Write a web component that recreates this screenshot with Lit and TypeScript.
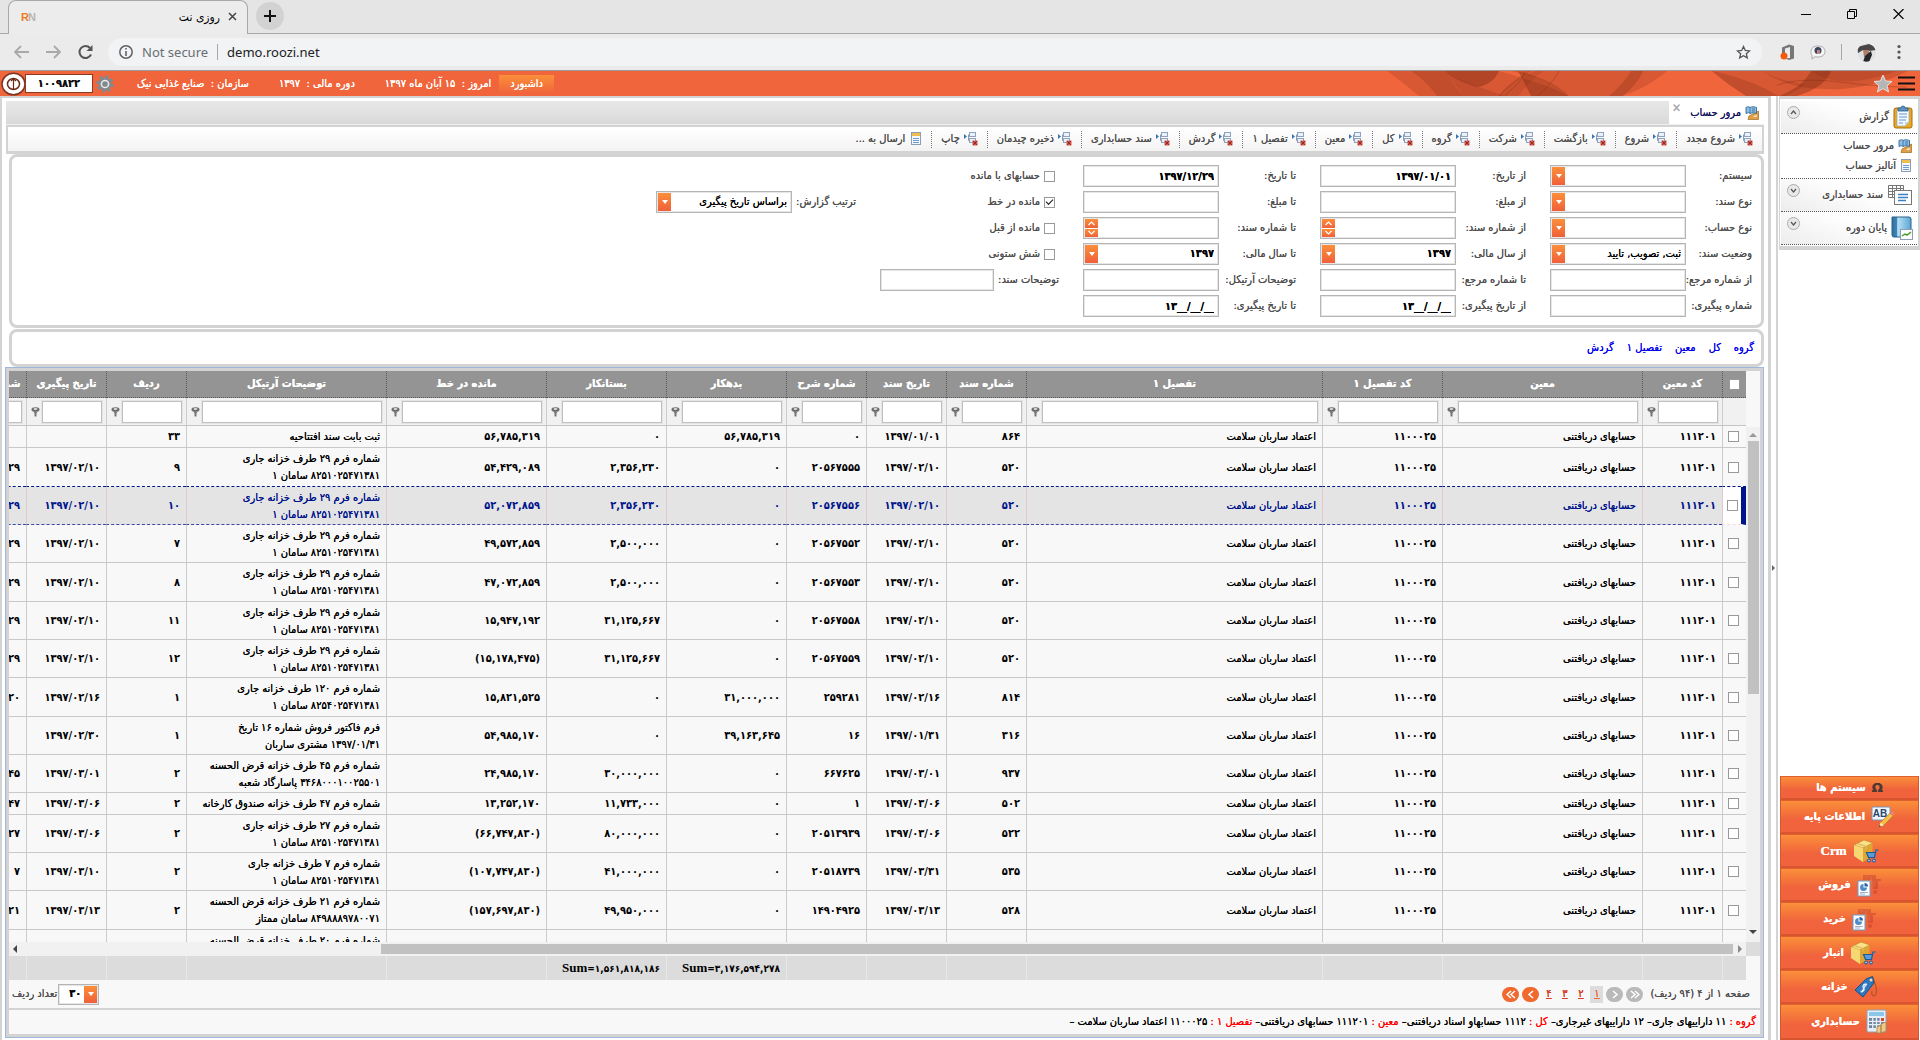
import { LitElement, html, css, nothing } from "lit";
import { customElement, state } from "lit/decorators.js";
import { classMap } from "lit/directives/class-map.js";

interface Row {
  doc: string;
  date: string;
  desc: string;
  debit: string;
  credit: string;
  balance: string;
  detail: string[];
  line: string;
  follow: string;
  form: string;
}

const SAMAN = "۸۲۵۱۰۲۵۴۷۱۳۸۱ سامان ۱";

const row = (
  doc: string, date: string, desc: string, debit: string, credit: string,
  balance: string, detail: string[], line: string, follow: string, form: string,
): Row => ({ doc, date, desc, debit, credit, balance, detail, line, follow, form });

const ROWS: Row[] = [
  row("۸۶۴", "۱۳۹۷/۰۱/۰۱", "۰", "۵۶,۷۸۵,۳۱۹", "۰", "۵۶,۷۸۵,۳۱۹", ["ثبت بابت سند افتتاحیه"], "۳۳", "", ""),
  row("۵۲۰", "۱۳۹۷/۰۲/۱۰", "۲۰۵۶۷۵۵۵", "۰", "۲,۳۵۶,۲۳۰", "۵۴,۴۲۹,۰۸۹", ["شماره فرم ۲۹ طرف خزانه جاری", SAMAN], "۹", "۱۳۹۷/۰۲/۱۰", "۲۹"),
  row("۵۲۰", "۱۳۹۷/۰۲/۱۰", "۲۰۵۶۷۵۵۶", "۰", "۲,۳۵۶,۲۳۰", "۵۲,۰۷۲,۸۵۹", ["شماره فرم ۲۹ طرف خزانه جاری", SAMAN], "۱۰", "۱۳۹۷/۰۲/۱۰", "۲۹"),
  row("۵۲۰", "۱۳۹۷/۰۲/۱۰", "۲۰۵۶۷۵۵۲", "۰", "۲,۵۰۰,۰۰۰", "۴۹,۵۷۲,۸۵۹", ["شماره فرم ۲۹ طرف خزانه جاری", SAMAN], "۷", "۱۳۹۷/۰۲/۱۰", "۲۹"),
  row("۵۲۰", "۱۳۹۷/۰۲/۱۰", "۲۰۵۶۷۵۵۳", "۰", "۲,۵۰۰,۰۰۰", "۴۷,۰۷۲,۸۵۹", ["شماره فرم ۲۹ طرف خزانه جاری", SAMAN], "۸", "۱۳۹۷/۰۲/۱۰", "۲۹"),
  row("۵۲۰", "۱۳۹۷/۰۲/۱۰", "۲۰۵۶۷۵۵۸", "۰", "۳۱,۱۲۵,۶۶۷", "۱۵,۹۴۷,۱۹۲", ["شماره فرم ۲۹ طرف خزانه جاری", SAMAN], "۱۱", "۱۳۹۷/۰۲/۱۰", "۲۹"),
  row("۵۲۰", "۱۳۹۷/۰۲/۱۰", "۲۰۵۶۷۵۵۹", "۰", "۳۱,۱۲۵,۶۶۷", "(۱۵,۱۷۸,۴۷۵)", ["شماره فرم ۲۹ طرف خزانه جاری", SAMAN], "۱۲", "۱۳۹۷/۰۲/۱۰", "۲۹"),
  row("۸۱۴", "۱۳۹۷/۰۲/۱۶", "۲۵۹۲۸۱", "۳۱,۰۰۰,۰۰۰", "۰", "۱۵,۸۲۱,۵۲۵", ["شماره فرم ۱۲۰ طرف خزانه جاری", "۸۲۵۴۰۲۵۴۷۱۳۸۱ سامان ۱"], "۱", "۱۳۹۷/۰۲/۱۶", "۱۲۰"),
  row("۳۱۶", "۱۳۹۷/۰۱/۳۱", "۱۶", "۳۹,۱۶۳,۶۴۵", "۰", "۵۴,۹۸۵,۱۷۰", ["فرم فاکتور فروش شماره ۱۶ تاریخ", "۱۳۹۷/۰۱/۳۱ مشتری ساربان"], "۱", "۱۳۹۷/۰۲/۳۰", ""),
  row("۹۳۷", "۱۳۹۷/۰۳/۰۱", "۶۶۷۶۲۵", "۰", "۳۰,۰۰۰,۰۰۰", "۲۴,۹۸۵,۱۷۰", ["شماره فرم ۴۵ طرف خزانه قرض الحسنه", "۳۴۶۸۰۰۰۱۰۰۲۵۵۰۱ پاسارگاد شعبه"], "۲", "۱۳۹۷/۰۳/۰۱", "۴۵"),
  row("۵۰۲", "۱۳۹۷/۰۳/۰۶", "۱", "۰", "۱۱,۷۳۳,۰۰۰", "۱۳,۲۵۲,۱۷۰", ["شماره فرم ۴۷ طرف خزانه صندوق کارخانه"], "۲", "۱۳۹۷/۰۳/۰۶", "۴۷"),
  row("۵۲۲", "۱۳۹۷/۰۳/۰۶", "۲۰۵۱۳۹۳۹", "۰", "۸۰,۰۰۰,۰۰۰", "(۶۶,۷۴۷,۸۳۰)", ["شماره فرم ۲۷ طرف خزانه جاری", SAMAN], "۲", "۱۳۹۷/۰۳/۰۶", "۲۷"),
  row("۵۳۵", "۱۳۹۷/۰۳/۳۱", "۲۰۵۱۸۷۳۹", "۰", "۴۱,۰۰۰,۰۰۰", "(۱۰۷,۷۴۷,۸۳۰)", ["شماره فرم ۷ طرف خزانه جاری", SAMAN], "۲", "۱۳۹۷/۰۳/۱۰", "۷"),
  row("۵۲۸", "۱۳۹۷/۰۳/۱۳", "۱۴۹۰۴۹۲۵", "۰", "۴۹,۹۵۰,۰۰۰", "(۱۵۷,۶۹۷,۸۳۰)", ["شماره فرم ۲۱ طرف خزانه قرض الحسنه", "۸۴۹۸۸۸۹۷۸۰۰۷۱ سامان ممتاز"], "۲", "۱۳۹۷/۰۳/۱۳", "۲۱"),
  row("", "", "", "", "", "", ["شماره فرم ۲۰ طرف خزانه قرض الحسنه", ""], "", "", ""),
];

const HEADS = [
  "کد معین", "معین", "کد تفصیل ۱", "تفصیل ۱", "شماره سند", "تاریخ سند", "شماره شرح",
  "بدهکار", "بستانکار", "مانده در خط", "توضیحات آرتیکل", "ردیف", "تاریخ پیگیری", "شماره پیگیری",
];

const TOOLS = [
  "شروع مجدد", "شروع", "بازگشت", "شرکت", "گروه", "کل", "معین", "تفصیل ۱",
  "گردش", "سند حسابداری", "ذخیره چیدمان", "چاپ",
];

/* ---------- icons ---------- */

const treeIcon = html`<svg width="14" height="14" viewBox="0 0 14 14">
  <path d="M0 2l3 2.500L0 7z" fill="#3a74b8"/>
  <path d="M4.500 2.500v6M4.500 8.500H6" stroke="#8b9bb2" fill="none"/>
  <rect x="5.500" y=".5" width="6" height="4" fill="#e9f1fb" stroke="#8fa3c0"/>
  <rect x="5.500" y="6.500" width="6" height="4" fill="#e9f1fb" stroke="#8fa3c0"/>
  <rect x="8.500" y="8.500" width="5" height="5" fill="#d0584e"/>
  <path d="M9 9l4 4m0-4l-4 4" stroke="#9a2c24" stroke-width="1"/>
</svg>`;

const sheetIcon = html`<svg width="12" height="14" viewBox="0 0 12 14">
  <rect x="1.500" y=".5" width="9" height="12" fill="#f4f8fd" stroke="#8c9db4"/>
  <rect x="2" y="1" width="8" height="3" fill="#f0bd4f"/>
  <path d="M3 6.500h6M3 8.500h6M3 10.500h6" stroke="#6d9ad0"/>
</svg>`;

const reviewIcon = html`<svg width="14" height="14" viewBox="0 0 14 14">
  <path d="M4 10l9.500-5v8.500H3z" fill="#e0a04a" stroke="#a56a1c" stroke-width=".7"/>
  <path d="M8 11l3.500-2.500V11z" fill="#fdf0d2"/>
  <path d="M1 1.500c2-1 3-1 4 0 2-1 4-1 6.500 0v6c-2.500-1-4.500-1-6.500 0-1-1-2-1-4 0z" fill="#8fbfe6" stroke="#2f6796" stroke-width=".9"/>
  <path d="M5 1.500v6M7 3h3M7 5h3" stroke="#2f6796" stroke-width=".8"/>
</svg>`;

const clipboardIcon = html`<svg width="20" height="24" viewBox="0 0 20 24">
  <rect x="1" y="3" width="18" height="20" rx="2" fill="#e9a925" stroke="#a96f0c"/>
  <path d="M4 5h12v12l-4 4H4z" fill="#f5faff" stroke="#96a7b8" stroke-width=".7"/>
  <path d="M12 21v-4h4z" fill="#c6d4e2"/>
  <path d="M6 9h8M6 12h8M6 15h7M6 18h4" stroke="#6098cf"/>
  <path d="M5 6V3h3a2 2 0 0 1 4 0h3v3z" fill="#5b93c2" stroke="#285d8d" stroke-width=".8"/>
</svg>`;

const docTableIcon = html`<svg width="26" height="22" viewBox="0 0 26 22">
  <path d="M1.500 1.500h15v12h-15zM1.500 4.500h15M1.500 7.500h15M1.500 10.500h15M5.500 1.500v12M9.500 1.500v12M13.500 1.500v12" fill="#fff" stroke="#777"/>
  <rect x="7.500" y="6.500" width="17" height="14" fill="#fdfeff" stroke="#777"/>
  <path d="M11 10.500h10M11 13.500h10M11 16.500h8" stroke="#3f7fc4" stroke-width="1.500"/>
</svg>`;

const bookIcon = html`<svg width="22" height="24" viewBox="0 0 22 24">
  <defs><linearGradient id="bk" x1="0" x2="1"><stop offset="0" stop-color="#2f6f9f"/><stop offset=".25" stop-color="#3f86b6"/><stop offset=".3" stop-color="#b7e0f5"/><stop offset="1" stop-color="#5aa6d3"/></linearGradient></defs>
  <path d="M1 1h17a2 2 0 0 1 2 2v18H3a2 2 0 0 1-2-2z" fill="url(#bk)" stroke="#2a618b"/>
  <rect x="9.500" y="13.500" width="12" height="10" fill="#fbfdff" stroke="#8c9db4"/>
  <path d="M11 20l3-2 2 1 4-3" stroke="#4a9a2c" stroke-width="1.500" fill="none"/>
</svg>`;

const chevron = (up: boolean) => html`<svg width="13" height="13" viewBox="0 0 13 13">
  <circle cx="6.500" cy="6.500" r="6" fill="#e9e9e9" stroke="#aaa"/>
  <path d=${up ? "M4 8l2.500-3L9 8" : "M4 5l2.500 3L9 5"} fill="none" stroke="#555" stroke-width="1.200"/>
</svg>`;

const filterIcon = html`<svg width="9" height="10" viewBox="0 0 9 10">
  <ellipse cx="4.500" cy="2.500" rx="4" ry="2.300" fill="#6b6b6b"/>
  <ellipse cx="4.500" cy="2" rx="2" ry="1" fill="#d8d8d8"/>
  <path d="M2.500 4.500h4l-1 2V9.500H3.500V6.500z" fill="#777"/>
</svg>`;

const boxCartIcon = html`<svg width="26" height="24" viewBox="0 0 26 24">
  <path d="M1 6v11l9 6 9-5V5z" fill="#c98f1f"/>
  <path d="M1 6l10-5 9 3-10 5z" fill="#fbe08a" stroke="#b98220" stroke-width=".6"/>
  <path d="M1 6l9 3v14l-9-6z" fill="#f7d774"/>
  <path d="M10 9l9.500-4.500V17L10 23z" fill="#e0a632"/>
  <path d="M5 4l9 3v3l-2 1V8L3 5z" fill="#d9b45a" opacity=".8"/>
  <path d="M25.500 11H23l-1.500 7.500h-6L13.500 13.500h9" fill="#5b9bd8" stroke="#1c5a9a" stroke-width="1.200"/>
  <circle cx="16" cy="21.500" r="1.500" fill="#8fc0ec" stroke="#1c5a9a"/>
  <circle cx="21" cy="21.500" r="1.500" fill="#8fc0ec" stroke="#1c5a9a"/>
</svg>`;

const reportCartIcon = html`<svg width="24" height="24" viewBox="0 0 24 24">
  <g fill="#b0302a" opacity=".35"><path d="M6 2h13v4h5v2h-3v8h-5l-1-9H6z"/><circle cx="18" cy="19" r="2"/></g>
  <path d="M9 4h2M14 4v4M17 8v6" stroke="#f0754f" opacity=".7"/>
  <rect x="1" y="8" width="12" height="15" fill="#fbfdff" stroke="#6f9cc6"/>
  <path d="M6.500 11a3.500 3.500 0 1 0 3.500 3.500H6.500z" fill="#4f8cc6"/>
  <path d="M7.500 10a3.500 3.500 0 0 1 3.500 3.500H7.500z" fill="#2c62a3"/>
  <path d="M3 19.500h8M3 21h5" stroke="#a8b2bf"/>
</svg>`;

const tagIcon = html`<svg width="24" height="24" viewBox="0 0 24 24">
  <path d="M19 3c2 6 5 12 3 16s-5 1-4-3" fill="none" stroke="#b8561c" stroke-width="1.300"/>
  <path d="M1 15L12 4l6.500-2.500L20 8 9 22z" fill="#2f78bd" stroke="#1b5088"/>
  <circle cx="17" cy="5" r="1.500" fill="#f5d6b0"/>
  <path d="M13 10c-3-2-5 1-3.500 3s0 4-3 3M12.500 8.500l-5 9" fill="none" stroke="#e7f2fc" stroke-width="1.300"/>
</svg>`;

const calcIcon = html`<svg width="22" height="26" viewBox="0 0 22 26">
  <rect x="1" y="1" width="19" height="22" rx="1.500" fill="#e8eef5" stroke="#8fa0b5"/>
  <rect x="3" y="3" width="15" height="4" fill="#8cc5ea"/>
  <path d="M3 9h15v10H3z" fill="#6f86a5"/>
  <path d="M3 12.300h15M3 15.700h15M6.700 9v10M10.500 9v10M14.300 9v10" stroke="#e8eef5" stroke-width="1.300"/>
  <rect x="15" y="9" width="3" height="3" fill="#d8472b"/>
  <path d="M11 18l4-2v8h-4zM15 15l5-2v9l-5 2z" fill="#ecc98c" stroke="#a67a3c" stroke-width=".7"/>
</svg>`;

const abIcon = html`<svg width="24" height="22" viewBox="0 0 24 22">
  <rect x="1" y="1" width="18" height="13" rx="1" fill="#f1f7fd" stroke="#7e95b3"/>
  <text x="9" y="11" text-anchor="middle" font-family="Liberation Sans" font-weight="bold" font-size="10" fill="#26456e">AB</text>
  <path d="M8 21l1.500-4.500L19 7l3 3-9.500 9.500z" fill="#f6bd4a" stroke="#b9791a" stroke-width=".7"/>
  <path d="M8 21l1.500-4.500 3 3z" fill="#fbe6c5"/><path d="M8 21l.6-2 1.400 1.300z" fill="#222"/>
  <path d="M19 7l2-2 3 3-2 2z" fill="#e9826f"/>
</svg>`;

const SYSTEMS: { label: string; icon: unknown; latin?: boolean }[] = [
  { label: "اطلاعات پایه", icon: abIcon },
  { label: "Crm", icon: boxCartIcon, latin: true },
  { label: "فروش", icon: reportCartIcon },
  { label: "خرید", icon: reportCartIcon },
  { label: "انبار", icon: boxCartIcon },
  { label: "خزانه", icon: tagIcon },
  { label: "حسابداری", icon: calcIcon },
];

type Kind = "text" | "combo" | "spin";
interface Field { id: string; label: string; kind: Kind; value?: string; }

const FIELDS: Field[][] = [
  [
    { id: "system", label: "سیستم:", kind: "combo" },
    { id: "fromDate", label: "از تاریخ:", kind: "text", value: "۱۳۹۷/۰۱/۰۱" },
    { id: "toDate", label: "تا تاریخ:", kind: "text", value: "۱۳۹۷/۱۲/۲۹" },
  ],
  [
    { id: "docType", label: "نوع سند:", kind: "combo" },
    { id: "fromSum", label: "از مبلغ:", kind: "text" },
    { id: "toSum", label: "تا مبلغ:", kind: "text" },
  ],
  [
    { id: "accType", label: "نوع حساب:", kind: "combo" },
    { id: "fromDoc", label: "از شماره سند:", kind: "spin" },
    { id: "toDoc", label: "تا شماره سند:", kind: "spin" },
  ],
  [
    { id: "docState", label: "وضعیت سند:", kind: "combo", value: "ثبت, تصویب, تایید" },
    { id: "fromYear", label: "از سال مالی:", kind: "combo", value: "۱۳۹۷" },
    { id: "toYear", label: "تا سال مالی:", kind: "combo", value: "۱۳۹۷" },
  ],
  [
    { id: "fromRef", label: "از شماره مرجع:", kind: "text" },
    { id: "toRef", label: "تا شماره مرجع:", kind: "text" },
    { id: "artDesc", label: "توضیحات آرتیکل:", kind: "text" },
  ],
  [
    { id: "followNo", label: "شماره پیگیری:", kind: "text" },
    { id: "fromFollow", label: "از تاریخ پیگیری:", kind: "text", value: "۱۳__/__/__" },
    { id: "toFollow", label: "تا تاریخ پیگیری:", kind: "text", value: "۱۳__/__/__" },
  ],
];

const CHECKS = ["حسابهای با مانده", "مانده در خط", "مانده از قبل", "شش ستونی"];

@customElement("app-root")
export class AppRoot extends LitElement {
  @state() private selected = 2;

  static styles = css`
    :host {
      display: flex;
      flex-direction: column;
      height: 100vh;
      overflow: hidden;
      background: #fff;
      color: #000;
      font: 11px/16px "DejaVu Sans Condensed", "DejaVu Sans", sans-serif;
      --line: #d3d3d3;
      --orange: #f0653c;
    }
    * { box-sizing: border-box; }
    button, input, select { font: inherit; color: inherit; text-shadow: inherit; margin: 0; padding: 0; border: 0; background: none; border-radius: 0; }
    button { cursor: pointer; }
    a { text-decoration: none; color: inherit; }
    svg { display: block; flex: none; }

    /* browser frame */
    .strip { flex: none; height: 34px; display: flex; align-items: flex-end; background: #e5e5e5; border-bottom: 1px solid #a9a9a9; }
    .tab { width: 240px; height: 34px; margin: 0 0 -1px 8px; padding: 0 10px 2px 12px; display: flex; align-items: center; gap: 8px; background: #ececec; border: 1px solid #a9a9a9; border-bottom: 0; border-radius: 8px 8px 0 0; font-size: 12px; }
    .tab .title { flex: 1; text-align: right; }
    .tab .logo { overflow: visible; }
    .plus { width: 28px; height: 28px; margin: 0 0 3px 8px; border-radius: 14px; background: #d2d2d2; display: grid; place-items: center; }
    .win { margin-left: auto; display: flex; gap: 36px; padding-right: 16px; align-self: center; padding-bottom: 6px; }
    .bar { flex: none; height: 37px; display: flex; align-items: center; padding: 0 14px; gap: 18px; background: #ebebeb; border-bottom: 1px solid #9b9b9b; }
    .nav { display: flex; gap: 17px; }
    .omni { flex: 1; height: 28px; margin-left: -3px; border-radius: 14px; background: #f1f3f4; display: flex; align-items: center; gap: 9px; padding: 0 11px; font: 13px/20px "Noto Sans", sans-serif; color: #202124; }
    .omni .ns { color: #6a6e73; }
    .omni .sep, .bar .sep { width: 1px; height: 16px; background: #a5a8ab; }
    .omni .fav { margin-left: auto; }
    .ext { display: flex; align-items: center; gap: 15px; }

    /* application header */
    .head, .work { text-shadow: 0 0 0 currentColor; }
    .head { position: relative; flex: none; height: 25px; display: flex; align-items: center; background: var(--orange); color: #fff; }
    .wave { position: absolute; top: 0; right: 5px; }
    .code { display: flex; align-items: center; }
    .code input { width: 68px; height: 19px; margin-left: -2px; background: #fff; border: 1px solid #8c3a20; color: #111; text-align: center; }
    .gear { margin-left: 3px; }
    .facts { display: flex; align-items: center; gap: 30px; margin-left: 23px; }
    .dash { height: 18px; padding: 0 11px; margin-left: 8px; background: linear-gradient(#fb8f3a, #f0653c); }
    .headend { position: relative; margin-left: auto; display: flex; align-items: center; gap: 5px; padding-right: 5px; }

    /* work area */
    .work { flex: 1; min-height: 0; display: flex; }
    .main { flex: 1; min-width: 0; display: flex; flex-direction: column; border: 2px solid var(--line); border-bottom: 0; border-right-width: 3px; padding: 3px 4px 2px 3px; }
    .tabs { flex: none; height: 24px; margin-left: 1px; display: flex; align-items: stretch; background: linear-gradient(#e8e8e8, #d9d9d9); border-bottom: 1px solid #eee; }
    .mtab { display: flex; align-items: center; gap: 4px; width: 95px; padding-right: 5px; background: #fff; color: #14145f; white-space: nowrap; }
    .mtab button { margin-right: auto; align-self: flex-start; color: #aaa; font-size: 12px; line-height: 14px; padding-left: 3px; }
    .tools { flex: none; height: 29px; margin-left: 1px; display: flex; align-items: center; border: 2px solid var(--line); border-bottom-width: 3px; background: linear-gradient(#fff, #f3f3f3); color: #505050; }
    .tools button { display: flex; align-items: center; gap: 4px; height: 17px; padding: 0 9px; border-left: 1px dotted #777; white-space: nowrap; }
    .tools button:last-child { border: 0; gap: 5px; }
    .panel { flex: none; margin-left: 4px; border: 3px solid var(--line); border-radius: 8px; background: #fff; }

    .form { padding: 8px 9px; display: grid; grid-template-columns: 66px 136px 94px 136px 101px 136px 89px 114px 88px 136px; grid-auto-rows: 22px; row-gap: 4px; align-items: center; color: #505050; }
    .form label { white-space: nowrap; }
    .form .lead { padding-right: 24px; }
    .box { height: 22px; display: flex; background: #fff; border: 1px solid #b5b5b5; box-shadow: inset 0 0 0 1px #e6e6e6; color: #000; }
    .box input, .box select { flex: 1; min-width: 0; height: 20px; padding: 0 4px; appearance: none; outline: none; }
    .box input { direction: ltr; text-align: right; }
    .box input, .code input, .digits { font-weight: bold; }
    .box select { direction: rtl; }
    .drop { width: 13px; margin: 1px; background: linear-gradient(#fb8f3a, #f0603a); display: grid; place-items: center; pointer-events: none; }
    .spins { width: 13px; display: flex; flex-direction: column; gap: 1px; margin: 1px; }
    .spins button { flex: 1; background: linear-gradient(#fb8f3a, #f0603a); display: grid; place-items: center; }
    .tick { display: flex; align-items: center; gap: 4px; padding-right: 28px; }
    input[type="checkbox"] { appearance: none; flex: none; width: 11px; height: 11px; border: 1px solid #999; background: #fff; display: grid; place-items: center; }
    input[type="checkbox"]:checked::after { content: ""; width: 6px; height: 3px; margin-top: -2px; border: solid #111; border-width: 0 0 1px 1px; rotate: -45deg; }

    .links { height: 38px; margin-top: 1px; display: flex; align-items: center; gap: 13px; padding: 0 7px; color: #0000f0; }

    /* data grid */
    .grid { flex: 1; min-height: 0; display: flex; flex-direction: column; border: 1px solid #9fb6dd; box-shadow: inset 0 0 0 3px var(--line); padding: 3px; background: #f8f8f8; }
    .body { flex: 1; min-height: 0; display: flex; }
    .view { flex: 1; min-width: 0; overflow: hidden; }
    table { table-layout: fixed; width: 1800px; border-collapse: separate; border-spacing: 0; }
    .c-tick { width: 24px; } .c-s { width: 80px; } .c-m { width: 120px; } .c-b { width: 160px; } .c-l { width: 200px; } .c-x { width: 296px; }
    th, td { padding: 0; overflow: hidden; white-space: nowrap; }
    thead th { height: 27px; background: #949494; color: #fff; border-left: 1px dotted #5a5a5a; border-bottom: 1px dotted #5a5a5a; text-align: center; }
    thead input { margin: 0 auto; }
    .frow td { height: 28px; background: #f1f1f1; border-left: 1px solid #ccc; border-bottom: 1px solid #c4c4c4; }
    .find { display: flex; align-items: center; gap: 2px; padding: 0 4px 0 3px; }
    .find input { flex: 1; min-width: 0; height: 22px; background: #fff; border: 1px solid #c0c0c0; box-shadow: 0 0 0 1px #e4e4e4; padding: 0 3px; }
    .find button { width: 10px; height: 16px; }
    .row td { height: 38px; padding: 0 6px; line-height: 17px; border-left: 1px solid #ccc; border-bottom: 1px solid #c8c8c8; }
    .row:nth-child(3n) td { height: 39px; }
    .row.one td { height: 22px; line-height: 16px; }
    .row .num { direction: ltr; text-align: right; font-weight: bold; text-shadow: none; }
    .row td.tickcell { padding: 0 7px 0 0; }
    .row.sel td { background: #e4e4e4; color: #00148c; border-bottom: 1px dashed #3a48a8; border-left-color: #e5c9c9; }
    .row.presel td { border-bottom: 1px dashed #00148c; }
    .row.sel td.tickcell { background: #fff; border-right: 5px solid #00148c; border-bottom-color: #f1dcd8; padding-right: 3px; }
    .vbar { width: 14px; flex: none; display: flex; flex-direction: column; align-items: center; padding: 60px 0 6px; background: linear-gradient(#f8f8f8 56px, #f1f1f1 56px); }
    .vthumb { width: 11px; height: 50%; background: #c1c1c1; margin-top: 2px; }
    .arrow-end { margin-top: auto; }
    .hbar { flex: none; height: 14px; display: flex; background: #f1f1f1; }
    .corner { width: 14px; background: #dcdcdc; }
    .htrack { flex: 1; display: flex; align-items: center; padding: 0 2px; }
    .hthumb { width: 78%; height: 10px; margin-right: 3px; background: #c1c1c1; }
    .htrack .arrow-end { margin: 0 auto 0 0; }
    .sums { flex: none; height: 24px; margin-right: 14px; overflow: hidden; }
    .sums td { height: 24px; padding: 0 6px; background: #dcdcdc; border-left: 1px solid #e8e8e8; direction: ltr; text-align: right; font-weight: bold; font-size: 10px; text-shadow: none; }
    .serif { font-family: "Liberation Serif", serif; font-size: 13px; }
    .pager { flex: none; height: 30px; display: flex; align-items: center; gap: 3px; padding: 0 10px 0 3px; border-bottom: 2px solid var(--line); color: #505050; }
    .pager .turn { width: 17px; height: 15px; border-radius: 8px; display: grid; place-items: center; background: #b9b9b9; }
    .pager .turn.on { background: #f06a30; }
    .pager .pg { width: 13px; height: 17px; text-align: center; color: #d63a1f; text-decoration: underline; }
    .pager .pg.now { background: #dcdcdc; color: #f0653c; }
    .pages { margin-left: 4px; }
    .size { margin-right: auto; display: flex; align-items: center; gap: 1px; }
    .size .box { width: 41px; height: 21px; }
    .size .box select { height: 19px; padding: 0 2px; }
    .info { flex: none; height: 24px; padding: 0 4px; line-height: 24px; white-space: nowrap; }
    .info span { color: #f00; }

    /* splitter and side bar */
    .split { flex: none; width: 5px; display: grid; align-items: center; justify-items: center; }
    .side { flex: none; width: 144px; display: flex; flex-direction: column; border-left: 2px solid var(--line); padding-left: 1px; color: #505050; }
    .groups { border: 3px solid var(--line); border-width: 3px 2px 4px 1px; padding: 2px 1px 1px; }
    .group { height: 33px; width: 100%; display: flex; align-items: center; gap: 4px; padding: 0 4px; border-bottom: 1px dotted #555; background: linear-gradient(200deg, #fff 40%, #ececec); }
    .group .chev { margin-right: auto; align-self: flex-start; margin-top: 5px; padding-left: 2px; }
    .subs { display: flex; flex-direction: column; padding: 2px 5px; border-bottom: 1px dotted #555; }
    .subs a { display: flex; align-items: center; gap: 4px; height: 20px; }
    .systems { margin: auto 1px 0; display: flex; flex-direction: column; color: #fff; }
    .systems button, .systems h2 { height: 34px; margin: 0; font-size: 11px; font-weight: bold; display: flex; align-items: center; justify-content: center; gap: 6px; border: 1px solid #d9552f; border-top-color: #e0602f; border-bottom-width: 2px; background: linear-gradient(#fb8f3a, #f0633c 60%); }
    .systems button:last-child { height: 36px; }
    .systems h2 { height: 24px; }
    .systems .latin { font: bold 13px "Liberation Serif", serif; }
    .omega { color: #4a3a30; font: bold 13px "DejaVu Sans", sans-serif; }
  `;

  private tri = (d: string, fill = "#555") =>
    html`<svg width="8" height="8" viewBox="0 0 8 8"><path d=${d} fill=${fill}/></svg>`;

  private drop = html`<span class="drop"><svg width="6" height="4" viewBox="0 0 6 4"><path d="M0 0h6L3 4z" fill="#fff"/></svg></span>`;

  private control(f: Field) {
    if (f.kind === "combo") {
      const digits = /^[۰-۹]/.test(f.value ?? "");
      return html`<div class="box"><select id=${f.id} class=${digits ? "digits" : ""}><option>${f.value ?? ""}</option></select>${this.drop}</div>`;
    }
    return html`<div class="box"><input id=${f.id} .value=${f.value ?? ""}>${f.kind === "spin"
      ? html`<span class="spins">
          <button aria-label="افزایش"><svg width="7" height="5" viewBox="0 0 7 5"><path d="M.5 4l3-3 3 3" fill="none" stroke="#fff" stroke-width="1.200"/></svg></button>
          <button aria-label="کاهش"><svg width="7" height="5" viewBox="0 0 7 5"><path d="M.5 1l3 3 3-3" fill="none" stroke="#fff" stroke-width="1.200"/></svg></button>
        </span>`
      : nothing}</div>`;
  }

  private cols() {
    const c = ["tick", "s", "l", "m", "x", "s", "s", "s", "m", "m", "b", "l", "s", "s", "s"];
    return html`<colgroup>${c.map((k) => html`<col class="c-${k}">`)}</colgroup>`;
  }

  private frame() {
    return html`
      <div class="strip">
        <div class="tab">
          <svg class="logo" width="16" height="12" viewBox="0 0 16 12" font-family="Liberation Sans" font-weight="bold" font-size="11"><text x="7" y="10" fill="#b9b4ae">N</text><text x="0" y="10" fill="#ee7d1f">R</text></svg>
          <span class="title" dir="rtl">روزی نت</span>
          <svg width="9" height="9" viewBox="0 0 9 9"><path d="M1 1l7 7M8 1L1 8" stroke="#444" stroke-width="1.500"/></svg>
        </div>
        <div class="plus"><svg width="12" height="12" viewBox="0 0 12 12"><path d="M6 0v12M0 6h12" stroke="#111" stroke-width="2"/></svg></div>
        <div class="win">
          <svg width="10" height="10" viewBox="0 0 10 10"><path d="M0 5.500h10" stroke="#000"/></svg>
          <svg width="10" height="10" viewBox="0 0 10 10"><path d="M.5 2.500h7v7h-7zM2.500 2.500v-2h7v7h-2" fill="none" stroke="#000"/></svg>
          <svg width="11" height="10" viewBox="0 0 11 10"><path d="M.5 0l10 10M10.500 0l-10 10" stroke="#000" stroke-width="1.200"/></svg>
        </div>
      </div>
      <div class="bar">
        <div class="nav">
          <svg width="15" height="14" viewBox="0 0 15 14"><path d="M7 1L1 7l6 6M1 7h14" fill="none" stroke="#a9a9a9" stroke-width="1.800"/></svg>
          <svg width="15" height="14" viewBox="0 0 15 14"><path d="M8 1l6 6-6 6M14 7H0" fill="none" stroke="#a9a9a9" stroke-width="1.800"/></svg>
          <svg width="15" height="14" viewBox="0 0 15 14"><path d="M13 9.500A6 6 0 1 1 12 3" fill="none" stroke="#555" stroke-width="2"/><path d="M14.500 0v6h-6z" fill="#555"/></svg>
        </div>
        <div class="omni">
          <svg width="14" height="14" viewBox="0 0 14 14"><circle cx="7" cy="7" r="6.200" fill="none" stroke="#5f6368" stroke-width="1.500"/><path d="M7 6v5M7 3v1.600" stroke="#5f6368" stroke-width="1.600"/></svg>
          <span class="ns">Not secure</span><span class="sep"></span><span>demo.roozi.net</span>
          <svg class="fav" width="15" height="15" viewBox="0 0 15 15"><path d="M7.500 1.500l1.800 4 4.200.4-3.200 2.800 1 4.200-3.800-2.200-3.800 2.200 1-4.200L1.500 5.900l4.200-.4z" fill="none" stroke="#555" stroke-width="1.300"/></svg>
        </div>
        <div class="ext">
          <svg width="15" height="16" viewBox="0 0 15 16"><path d="M2 3.500L9 .5l5 1.500v12.500L9 16l-4-1.500 5-.5V3L5 4.500V12H2z" fill="#777"/><circle cx="4" cy="12" r="3.500" fill="#f25a0c"/></svg>
          <svg width="16" height="15" viewBox="0 0 16 15"><path d="M8 1c4 0 7 2 7 5.500S12 12 8 12c-1.500 0-2 0-3-.4L2 14V10.500C1 9.500 1 8 1 6.500 1 3 4 1 8 1z" fill="#f6f6f6" stroke="#aaa"/><circle cx="8" cy="5.500" r="3.500" fill="#3c4462"/><path d="M7 5h3v4H7z" fill="#b9897b"/></svg>
          <span class="sep"></span>
          <svg width="19" height="19" viewBox="0 0 19 19"><clipPath id="av"><circle cx="9.500" cy="9.500" r="9.300"/></clipPath><g clip-path="url(#av)"><path d="M0 0h19v19H0z" fill="#dfe2e4"/><path d="M0 4l12-3 7 3v3l-7 1-6-1-5 3z" fill="#4a4647"/><path d="M6 7h6v7H7z" fill="#b07f6a"/><path d="M6 19l2-6 6-5 1 4-3 7z" fill="#27262a"/></g></svg>
          <svg width="15" height="16" viewBox="0 0 15 16"><g fill="#555"><circle cx="8" cy="2.500" r="1.600"/><circle cx="8" cy="8" r="1.600"/><circle cx="8" cy="13.500" r="1.600"/></g></svg>
        </div>
      </div>`;
  }

  private header() {
    return html`<header class="head">
      <svg class="wave" width="528" height="25" viewBox="0 0 528 25">
        <g fill="#7a2a12">
          <path d="M0 0h112c20 6 50 14 70 25H32C22 17 12 8 0 0z" opacity=".2"/>
          <path d="M24 0h34c8 10 10 18 20 25H50C44 16 36 8 24 0z" opacity=".25"/>
          <path d="M58 0h54c-4 9-12 15-22 16C78 12 66 8 58 0z" opacity=".4"/>
          <path d="M58 0c10 8 28 14 60 25H78C70 18 66 10 58 0z" opacity=".2"/>
          <path d="M131 0c14 4 40 12 51 25h-38c-4-8-8-16-13-25z" opacity=".4"/>
          <path d="M112 25c6-10 16-18 38-25h6c-10 8-20 18-24 25z" opacity=".15"/>
          <path d="M124 0h156c-12 10-28 20-46 25h-52C170 12 150 6 124 0z" opacity=".2"/>
          <path d="M222 25c8-7 18-17 22-25h12c-4 10-12 18-20 25z" opacity=".28"/>
          <path d="M325 0h50c14 8 26 10 44 14l-20 11h-40c-12-8-24-16-34-25z" opacity=".2"/>
          <path d="M325 0c20 4 50 14 66 25h-32c-12-8-24-16-34-25z" opacity=".25"/>
          <path d="M392 25c16-6 26-14 32-25h20c-4 12-18 20-34 25z" opacity=".4"/>
          <path d="M375 0c24 16 50 19 80 18 26-2 46-8 66-18z" opacity=".25"/>
          <path d="M425 0c10 8 26 12 44 10 16-2 30-6 40-10z" opacity=".2"/>
        </g>
        <path d="M112 25c12-12 20-18 30-25M138 0c-2 10-14 18-20 25M150 25c10-8 18-17 22-25M390 14c40-12 70 2 130 2" stroke="#7a2a12" opacity=".35" fill="none"/>
      </svg>
      <div class="code">
        <svg width="27" height="24" viewBox="0 0 27 24"><ellipse cx="13.500" cy="12" rx="11.500" ry="10.800" fill="#fff" stroke="#7d3520" stroke-width="1.500"/><ellipse cx="13.500" cy="12" rx="6" ry="5.500" fill="none" stroke="#6b2a1a" stroke-width="1.500"/><path d="M13.500 6v11M11 9l2.500-2.500L16 9" stroke="#6b2a1a" stroke-width="1.200" fill="none"/></svg>
        <input aria-label="کد" .value=${"۱۰۰۹۸۲۲"}>
      </div>
      <svg class="gear" width="18" height="18" viewBox="0 0 18 18"><circle cx="9" cy="9" r="7.500" fill="none" stroke="#7d8a91" stroke-width="2.600" stroke-dasharray="3 2.890"/><circle cx="9" cy="9" r="6.500" fill="#7d8a91"/><circle cx="9" cy="9" r="3.600" fill="none" stroke="#f3e9e4" stroke-width="1.500"/></svg>
      <div class="facts">
        <span dir="rtl">سازمان :&nbsp; صنایع غذایی نیک</span>
        <span dir="rtl">دوره مالی :&nbsp; ۱۳۹۷</span>
        <span dir="rtl">امروز :&nbsp; ۱۵ آبان ماه ۱۳۹۷</span>
      </div>
      <button class="dash">داشبورد</button>
      <div class="headend">
        <svg width="20" height="19" viewBox="0 0 20 19"><path d="M10 1l2.600 6 6.400.5-5 4.200 1.600 6.300L10 14.600 4.400 18 6 11.700 1 7.500 7.400 7z" fill="#b5b5b5" stroke="#e6e0dd"/></svg>
        <svg width="17" height="15" viewBox="0 0 17 15"><path d="M0 1.500h17M0 7.500h17M0 13.500h17" stroke="#111" stroke-width="2"/></svg>
      </div>
    </header>`;
  }

  private form() {
    return html`<form class="panel form" @submit=${(e: Event) => e.preventDefault()}>
      ${FIELDS.map((line, r) => html`
        ${line.map((f, i) => html`<label for=${f.id} class=${i ? "lead" : ""}>${f.label}</label>${this.control(f)}`)}
        ${r < 4
          ? html`<label class="tick"><input type="checkbox" .checked=${r === 1}>${CHECKS[r]}</label>
              <span></span>`
          : r === 4
            ? html`<label for="docDesc" class="lead">توضیحات سند:</label><div class="box"><input id="docDesc"></div>`
            : html`<span></span><span></span>`}
        ${r === 1
          ? html`<label for="order" class="lead">ترتیب گزارش:</label>
              <div class="box"><select id="order"><option>براساس تاریخ پیگیری</option></select>${this.drop}</div>`
          : html`<span></span><span></span>`}
      `)}
    </form>`;
  }

  private dataRow(r: Row, i: number) {
    const cls = classMap({ row: true, one: r.detail.length === 1, sel: i === this.selected, presel: i === this.selected - 1 });
    const known = r.doc !== "";
    return html`<tr class=${cls} @click=${() => (this.selected = i)}>
      <td class="tickcell">${known ? html`<input type="checkbox" aria-label="انتخاب ردیف">` : nothing}</td>
      <td class="num">${known ? "۱۱۱۲۰۱" : ""}</td>
      <td>${known ? "حسابهای دریافتنی" : ""}</td>
      <td class="num">${known ? "۱۱۰۰۰۲۵" : ""}</td>
      <td>${known ? "اعتماد ساربان سلامت" : ""}</td>
      <td class="num">${r.doc}</td>
      <td class="num">${r.date}</td>
      <td class="num">${r.desc}</td>
      <td class="num">${r.debit}</td>
      <td class="num">${r.credit}</td>
      <td class="num">${r.balance}</td>
      <td>${r.detail[0]}${r.detail.length > 1 ? html`<br>${r.detail[1] || html`&nbsp;`}` : nothing}</td>
      <td class="num">${r.line}</td>
      <td class="num">${r.follow}</td>
      <td class="num">${r.form}</td>
    </tr>`;
  }

  private grid() {
    const turn = (d: string, label: string, on = false) => html`<button class="turn ${on ? "on" : ""}" aria-label=${label}>
      <svg width="10" height="9" viewBox="0 0 10 9"><path d=${d} fill="none" stroke="#fff" stroke-width="1.500"/></svg></button>`;
    return html`<section class="grid">
      <div class="body">
        <div class="vbar">
          ${this.tri("M0 6l4-4 4 4z", "#999")}
          <div class="vthumb"></div>
          <div class="arrow-end">${this.tri("M0 2l4 4 4-4z", "#444")}</div>
        </div>
        <div class="view">
          <table>
            ${this.cols()}
            <thead><tr>
              <th><input type="checkbox" aria-label="انتخاب همه"></th>
              ${HEADS.map((h) => html`<th>${h}</th>`)}
            </tr></thead>
            <tbody>
              <tr class="frow"><td></td>${HEADS.map((h) => html`<td><div class="find">
                <input aria-label=${h}><button aria-label="فیلتر">${filterIcon}</button></div></td>`)}</tr>
              ${ROWS.map((r, i) => this.dataRow(r, i))}
            </tbody>
          </table>
        </div>
      </div>
      <div class="hbar">
        <div class="corner"></div>
        <div class="htrack">
          ${this.tri("M2 0l4 4-4 4z", "#888")}
          <div class="hthumb"></div>
          <div class="arrow-end">${this.tri("M6 0L2 4l4 4z", "#444")}</div>
        </div>
      </div>
      <div class="sums"><table>${this.cols()}<tbody><tr>
        ${[0, 1, 2, 3, 4, 5, 6, 7].map(() => html`<td></td>`)}
        <td><span class="serif">Sum</span>=۳,۱۷۶,۵۹۴,۲۷۸</td>
        <td><span class="serif">Sum</span>=۱,۵۶۱,۸۱۸,۱۸۶</td>
        ${[0, 1, 2, 3, 4].map(() => html`<td></td>`)}
      </tr></tbody></table></div>
      <div class="pager">
        <span class="pages">صفحه ۱ از ۴ (۹۴ ردیف)</span>
        ${turn("M1 1l4 3.500L1 8M5 1l4 3.500L5 8", "صفحه اول")}
        ${turn("M3 1l4 3.500L3 8", "صفحه قبل")}
        ${["۱", "۲", "۳", "۴"].map((n, i) => html`<a href="#" class="pg ${i ? "" : "now"}">${n}</a>`)}
        ${turn("M7 1L3 4.500 7 8", "صفحه بعد", true)}
        ${turn("M5 1L1 4.500 5 8M9 1L5 4.500 9 8", "صفحه آخر", true)}
        <div class="size">
          <div class="box">${this.drop}<select id="size" class="digits"><option>۳۰</option></select></div>
          <label for="size">تعداد ردیف</label>
        </div>
      </div>
      <div class="info"><span>گروه :</span> ۱۱ داراییهای جاری– ۱۲ داراییهای غیرجاری– <span>کل :</span> ۱۱۱۲ حسابهاو اسناد دریافتنی– <span>معین :</span> ۱۱۱۲۰۱ حسابهای دریافتنی– <span>تفصیل ۱ :</span> ۱۱۰۰۰۲۵ اعتماد ساربان سلامت –</div>
    </section>`;
  }

  private side() {
    return html`<aside class="side">
      <div class="groups">
        <button class="group">${clipboardIcon}<span>گزارش</span><span class="chev">${chevron(true)}</span></button>
        <div class="subs">
          <a href="#">${reviewIcon}<span>مرور حساب</span></a>
          <a href="#">${sheetIcon}<span>آنالیز حساب</span></a>
        </div>
        <button class="group">${docTableIcon}<span>سند حسابداری</span><span class="chev">${chevron(false)}</span></button>
        <button class="group">${bookIcon}<span>پایان دوره</span><span class="chev">${chevron(false)}</span></button>
      </div>
      <nav class="systems">
        <h2><span class="omega">Ω</span>سیستم ها</h2>
        ${SYSTEMS.map((s) => html`<button>${s.icon}<span class=${s.latin ? "latin" : ""}>${s.label}</span></button>`)}
      </nav>
    </aside>`;
  }

  render() {
    return html`
      ${this.frame()}
      ${this.header()}
      <div class="work" dir="rtl">
        ${this.side()}
        <div class="split"><svg width="3" height="6" viewBox="0 0 3 6"><path d="M0 0l3 3-3 3z" fill="#666"/></svg></div>
        <main class="main">
          <div class="tabs"><div class="mtab">${reviewIcon}<span>مرور حساب</span><button aria-label="بستن">✕</button></div></div>
          <div class="tools">
            ${TOOLS.map((t) => html`<button>${treeIcon}<span>${t}</span></button>`)}
            <button>${sheetIcon}<span>ارسال به ...</span></button>
          </div>
          ${this.form()}
          <nav class="panel links">
            ${["گروه", "کل", "معین", "تفصیل ۱", "گردش"].map((t) => html`<a href="#">${t}</a>`)}
          </nav>
          ${this.grid()}
        </main>
      </div>`;
  }
}
